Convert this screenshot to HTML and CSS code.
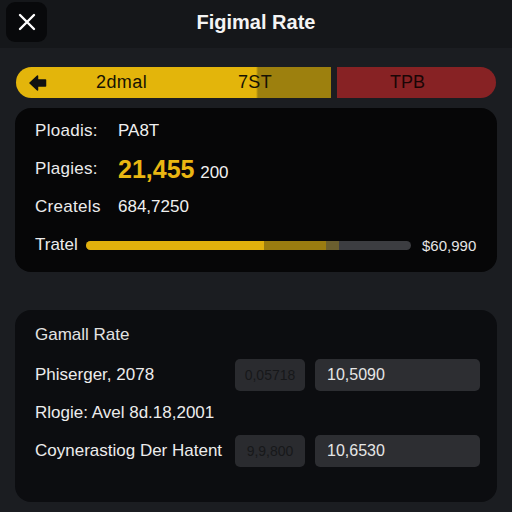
FILE: index.html
```html
<!DOCTYPE html>
<html>
<head>
<meta charset="utf-8">
<link rel="stylesheet" href="styles.css">
</head>
<body>
<header class="topbar">
  <button class="close" aria-label="Close">
    <svg width="18" height="18" viewBox="0 0 18 18"><path d="M2 2 L16 16 M16 2 L2 16" stroke="#fff" stroke-width="2.4" stroke-linecap="round" fill="none"/></svg>
  </button>
  <h1 class="title">Figimal Rate</h1>
</header>

<div class="segbar">
  <div class="seg-gold">
    <svg class="arrow" width="18" height="16" viewBox="0 0 18 16"><path d="M1 8 L8.5 1 L8.5 5 L16.5 5 L16.5 11 L8.5 11 L8.5 15 Z" fill="#111" stroke="#111" stroke-width="1.5" stroke-linejoin="round"/></svg>
    <span class="seg-a">2dmal</span>
    <span class="seg-b">7ST</span>
  </div>
  <div class="seg-red"><span>TPB</span></div>
</div>

<section class="card card-stats">
  <div class="row"><span class="lbl">Ploadis:</span><span class="val">PA8T</span></div>
  <div class="row"><span class="lbl">Plagies:</span><span class="val"><b class="big">21,455</b> 200</span></div>
  <div class="row"><span class="lbl">Createls</span><span class="val">684,7250</span></div>
  <div class="row"><span class="lbl short">Tratel</span>
    <div class="progress">
      <i class="p1"></i><i class="p2"></i><i class="p3"></i><i class="p4"></i>
    </div>
    <span class="total">$60,990</span>
  </div>
</section>

<section class="card card-rate">
  <div class="rate-title">Gamall Rate</div>
  <div class="rrow"><span class="rlbl">Phiserger, 2078</span><span class="box small">0,05718</span><span class="box wide">10,5090</span></div>
  <div class="rrow"><span class="rlbl">Rlogie: Avel 8d.18,2001</span></div>
  <div class="rrow"><span class="rlbl">Coynerastiog Der Hatent</span><span class="box small">9,9,800</span><span class="box wide">10,6530</span></div>
</section>
</body>
</html>
```

FILE: styles.css
```css
* { box-sizing: border-box; }
html, body { margin: 0; padding: 0; }
body {
  width: 512px;
  height: 512px;
  overflow: hidden;
  background: #1b1d21;
  font-family: "Liberation Sans", Arial, sans-serif;
  color: #e9e9e9;
}
.topbar {
  height: 48px;
  background: #15171a;
  display: flex;
  align-items: center;
  padding: 0 6px;
  position: relative;
}
.close {
  width: 41px;
  height: 40px;
  margin-top: -4px;
  border: none;
  border-radius: 9px;
  background: #08090b;
  display: flex;
  align-items: center;
  justify-content: center;
  padding: 0;
}
.title {
  flex: 1;
  margin: -4px 0 0 -41px;
  padding-left: 0;
  text-align: center;
  font-size: 20px;
  font-weight: 700;
  color: #f4f4f4;
}
.segbar {
  margin: 19px 16px 0 16px;
  height: 31px;
  display: flex;
  gap: 6px;
}
.seg-gold {
  width: 315px;
  border-radius: 16px 0 0 16px;
  background: linear-gradient(90deg, #e3b50b 0, #e3b50b 240px, #9d800e 242px, #9d800e 100%);
  display: flex;
  align-items: center;
  padding-left: 13px;
  font-size: 18px;
  color: #161204;
}
.seg-a { margin-left: 49px; letter-spacing: 0.4px; }
.seg-b { margin-left: 91px; letter-spacing: 0.3px; }
.seg-red {
  flex: 1;
  border-radius: 0 16px 16px 0;
  background: #872224;
  display: flex;
  align-items: center;
  padding-left: 53px;
  font-size: 18px;
  color: #1a0606;
}
.card {
  margin: 0 15px;
  border-radius: 16px;
}
.card-stats {
  margin-top: 10px;
  height: 164px;
  background: #060607;
  padding: 4px 20px 8px 20px;
}
.row {
  height: 38px;
  display: flex;
  align-items: center;
  font-size: 17px;
}
.lbl { width: 83px; color: #ececec; letter-spacing: 0.3px; }
.lbl.short { width: 51px; letter-spacing: 0; }
.val { color: #f0f0f0; }
.big {
  color: #e9b612;
  font-size: 25px;
  font-weight: 700;
  margin-right: 1px;
}
.progress {
  width: 325px;
  height: 9px;
  border-radius: 5px;
  overflow: hidden;
  display: flex;
  background: #3c3d41;
}
.progress i { display: block; height: 100%; }
.p1 { width: 178px; background: #e1b00c; }
.p2 { width: 62px; background: #9a7c10; }
.p3 { width: 13px; background: #6b5f2f; }
.p4 { flex: 1; }
.total { margin-left: 11px; font-size: 15px; color: #e5e5e5; }
.card-rate {
  margin-top: 38px;
  height: 192px;
  background: #0c0d10;
  padding: 6px 17px 0 20px;
}
.rate-title {
  height: 38px;
  display: flex;
  align-items: center;
  font-size: 17px;
  color: #e3e3e3;
  margin-bottom: 2px;
}
.rrow {
  height: 38px;
  display: flex;
  align-items: center;
  font-size: 17px;
  color: #ececec;
}
.rlbl { width: 200px; }
.box {
  height: 32px;
  border-radius: 5px;
  display: flex;
  align-items: center;
  font-size: 16px;
}
.box.small {
  width: 70px;
  background: #2a2b2f;
  color: #17181a;
  justify-content: center;
  font-size: 14px;
}
.box.wide {
  width: 165px;
  margin-left: 10px;
  background: #2d2e32;
  color: #e6e6e6;
  padding-left: 12px;
}
```
